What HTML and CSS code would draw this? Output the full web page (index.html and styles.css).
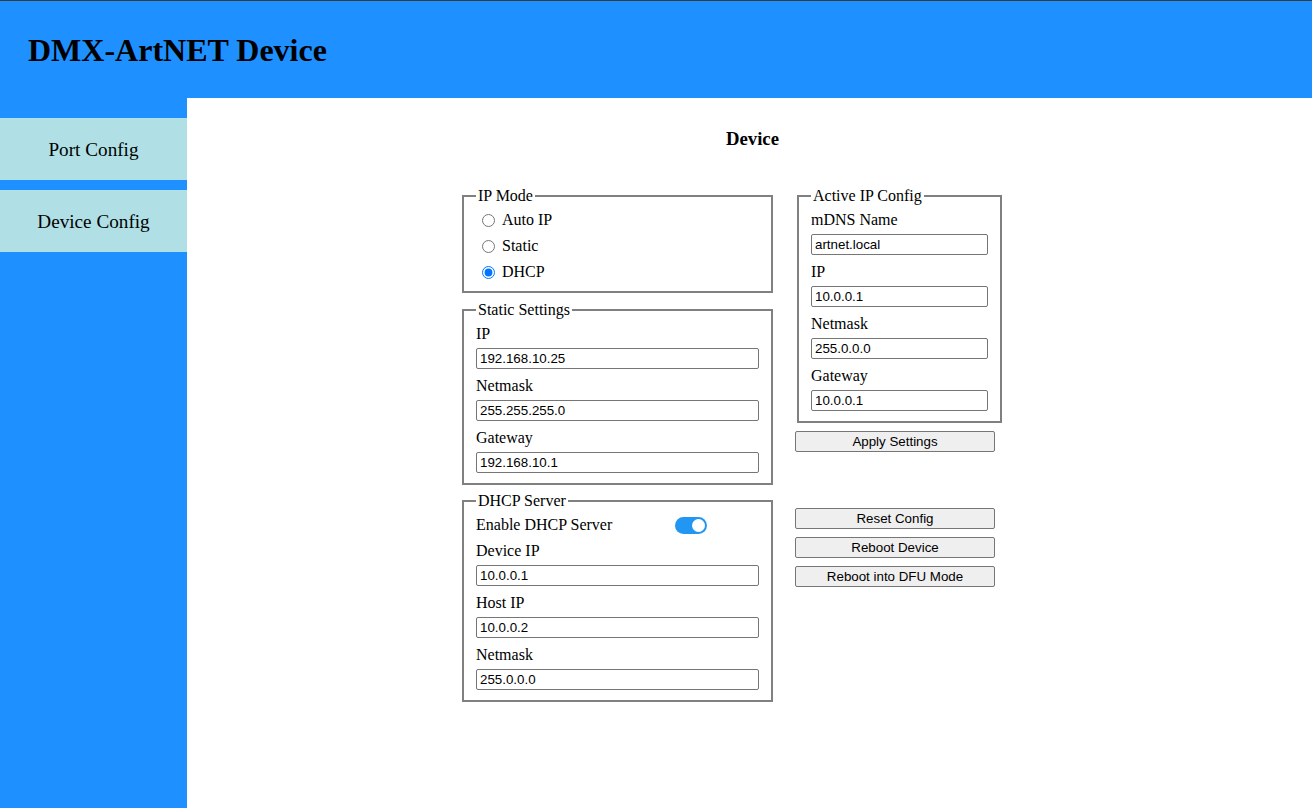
FILE: index.html
```html
<!DOCTYPE html>
<html>
<head>
<meta charset="utf-8">
<title>DMX-ArtNET Device</title>
<link rel="stylesheet" href="styles.css">
</head>
<body>
<header class="header">
  <h1 class="title">DMX-ArtNET Device</h1>
</header>
<div class="layout">
  <nav class="sidebar">
    <div class="nav-item">Port Config</div>
    <div class="nav-item">Device Config</div>
  </nav>
  <main class="main">
    <h3 class="page-title">Device</h3>
    <div class="columns">
      <div class="col col-left">
        <fieldset class="group group-mode">
          <legend>IP Mode</legend>
          <div class="radios">
            <label class="radio-row"><input type="radio" name="mode" class="radio"> Auto IP</label>
            <label class="radio-row"><input type="radio" name="mode" class="radio"> Static</label>
            <label class="radio-row"><input type="radio" name="mode" class="radio" checked> DHCP</label>
          </div>
        </fieldset>
        <fieldset class="group group-static">
          <legend>Static Settings</legend>
          <label class="field-label">IP</label>
          <input class="field" type="text" value="192.168.10.25">
          <label class="field-label">Netmask</label>
          <input class="field" type="text" value="255.255.255.0">
          <label class="field-label">Gateway</label>
          <input class="field" type="text" value="192.168.10.1">
        </fieldset>
        <fieldset class="group group-dhcp">
          <legend>DHCP Server</legend>
          <div class="toggle-row">
            <span class="toggle-label">Enable DHCP Server</span>
            <span class="toggle"><span class="knob"></span></span>
          </div>
          <label class="field-label">Device IP</label>
          <input class="field" type="text" value="10.0.0.1">
          <label class="field-label">Host IP</label>
          <input class="field" type="text" value="10.0.0.2">
          <label class="field-label">Netmask</label>
          <input class="field" type="text" value="255.0.0.0">
        </fieldset>
      </div>
      <div class="col col-right">
        <fieldset class="group group-active">
          <legend>Active IP Config</legend>
          <label class="field-label">mDNS Name</label>
          <input class="field" type="text" value="artnet.local">
          <label class="field-label">IP</label>
          <input class="field" type="text" value="10.0.0.1">
          <label class="field-label">Netmask</label>
          <input class="field" type="text" value="255.0.0.0">
          <label class="field-label">Gateway</label>
          <input class="field" type="text" value="10.0.0.1">
        </fieldset>
        <button class="btn btn-apply">Apply Settings</button>
        <div class="btn-stack">
          <button class="btn">Reset Config</button>
          <button class="btn">Reboot Device</button>
          <button class="btn">Reboot into DFU Mode</button>
        </div>
      </div>
    </div>
  </main>
</div>
</body>
</html>
```
FILE: styles.css
```css
* { box-sizing: border-box; }
html, body { margin: 0; padding: 0; }
body {
  font-family: "Liberation Serif", "Times New Roman", serif;
  font-size: 16px;
  color: #000;
  background: #fff;
  height: 808px;
  overflow: hidden;
}
.header {
  height: 98px;
  border-top: 1px solid #3a3a3a;
  background: #1e90ff;
  padding-left: 28px;
  padding-top: 31px;
}
.title {
  margin: 0;
  font-size: 32px;
  font-weight: bold;
  line-height: 37px;
}
.layout {
  display: flex;
  height: 710px;
}
.sidebar {
  width: 187px;
  flex: none;
  background: #1e90ff;
  padding-top: 20px;
  display: flex;
  flex-direction: column;
  gap: 10px;
}
.nav-item {
  height: 62px;
  background: #b0e0e6;
  display: flex;
  align-items: center;
  justify-content: center;
  font-size: 19.2px;
  padding-top: 2px;
}
.main {
  flex: 1;
  padding-top: 30px;
}
.page-title {
  margin: 0;
  font-size: 18.72px;
  font-weight: bold;
  text-align: center;
  line-height: 22px;
  padding-left: 6px;
}
.columns {
  display: flex;
  justify-content: center;
  padding-right: 35px;
  margin-top: 37px;
  gap: 22px;
  align-items: flex-start;
}
.col { display: flex; flex-direction: column; }
.col-left { width: 311px; }
.col-right { width: 207px; }
.group {
  margin: 0;
  border: 2px solid #808080;
  padding: 5px 12px 10px;
  display: flex;
  flex-direction: column;
  min-width: 0;
}
.group-static { margin-top: 8px; }
.group-dhcp { margin-top: 7px; }
.group legend {
  padding: 0 2px;
  font-size: 16px;
  line-height: 18px;
}
.group-mode { padding-top: 6px; padding-bottom: 10px; }
.group-active { width: 205px; margin-left: 2px; }
.radios {
  display: flex;
  flex-direction: column;
  gap: 8px;
}
.radio-row {
  display: flex;
  align-items: center;
  height: 18px;
  line-height: 18px;
}
.radio {
  margin: 1px 7px 0 6px;
  width: 13px;
  height: 13px;
  accent-color: #0075ff;
}
.field-label {
  display: block;
  line-height: 19px;
  margin-bottom: 5px;
}
.field {
  display: block;
  width: 100%;
  height: 21px;
  margin: 0 0 7px 0;
  padding: 1px 3px;
  border: 1px solid #767676;
  border-radius: 2px;
  font-family: "Liberation Sans", Arial, sans-serif;
  font-size: 13.33px;
  color: #000;
  background: #fff;
}
.field:last-child { margin-bottom: 0; }
.toggle-row {
  display: flex;
  align-items: center;
  height: 19px;
  margin-bottom: 7px;
}
.toggle-label {
  width: 199px;
  flex: none;
  line-height: 18px;
}
.toggle {
  width: 32px;
  height: 17px;
  border-radius: 9px;
  background: #2196f3;
  position: relative;
  margin-top: 1px;
}
.knob {
  position: absolute;
  right: 2px;
  top: 2px;
  width: 13px;
  height: 13px;
  border-radius: 50%;
  background: #fff;
}
.btn {
  display: block;
  width: 200px;
  height: 21px;
  padding: 1px 6px;
  border: 1px solid #767676;
  border-radius: 2px;
  background: #efefef;
  font-family: "Liberation Sans", Arial, sans-serif;
  font-size: 13.33px;
  color: #000;
  line-height: 17px;
}
.btn-apply { margin-top: 8px; }
.btn-stack {
  margin-top: 56px;
  display: flex;
  flex-direction: column;
  gap: 8px;
}
```
